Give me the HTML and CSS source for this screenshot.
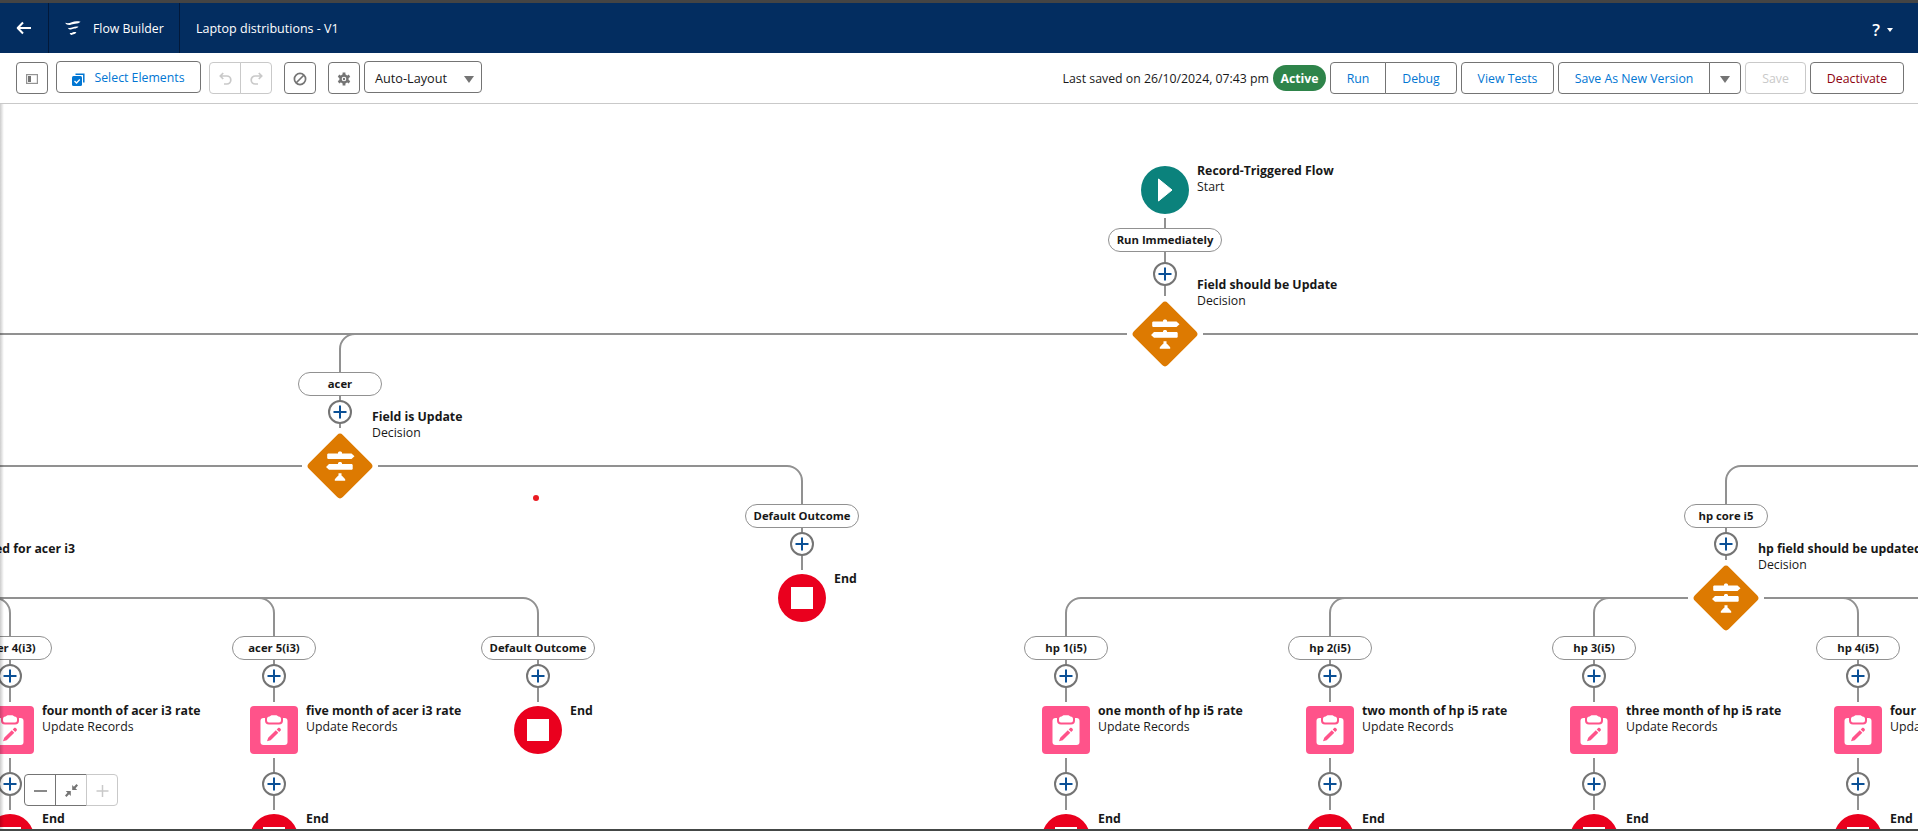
FILE: index.html
```
<!DOCTYPE html>
<html lang="en">
<head>
<meta charset="utf-8">
<title>Flow Builder</title>
<link rel="stylesheet" href="styles.css">
</head>
<body>
<svg class="defs" aria-hidden="true">
  <symbol id="decision" viewBox="0 0 66 66">
    <rect x="9" y="9" width="48" height="48" rx="4" transform="rotate(45 33 33)" fill="#dd7a01"/>
    <path fill="#fff" d="M21 20.500h10v-1l1-1h2l1 1v1h9.500l3 2.800-3 2.800H21l-.8-.8v-4zM22 31.100h9v-1l1-1h2l1 1v1h10l.7.8v4l-.7.8H22l-3-2.800zM31.500 40.300h3v2.200l1.200 1 2.500 2.800v1.500H27.800v-1.500l2.500-2.800 1.200-1z"/>
  </symbol>
  <symbol id="record" viewBox="0 0 48 48">
    <rect width="48" height="48" rx="4" fill="#ff538a"/>
    <rect x="10.500" y="12" width="27" height="27" rx="3" fill="#fff"/>
    <path fill="#ff538a" d="M15 11h18v3.500a4 4 0 0 1-4 4H19a4 4 0 0 1-4-4z"/>
    <path fill="#fff" d="M19.500 10.500l2-1.300h5l2 1.300a2.500 2.500 0 0 1 2.500 2.500v1.500a2 2 0 0 1-2 2H19a2 2 0 0 1-2-2V13a2.500 2.500 0 0 1 2.500-2.500z"/>
    <path fill="#ff538a" d="M17 35.300l1.200-3.600 7.600-7.400 2.500 2.500-7.600 7.400zM26.700 23.400l1.700-1.600c.8-.8 3.300 1.500 2.500 2.500l-1.700 1.600z"/>
  </symbol>
  <symbol id="end" viewBox="0 0 48 48">
    <circle cx="24" cy="24" r="24" fill="#ea001e"/><rect x="13" y="13" width="22" height="22" fill="#fff"/>
  </symbol>
  <symbol id="start" viewBox="0 0 48 48">
    <circle cx="24" cy="24" r="24" fill="#0b827c"/><path d="M17.500 13v22L31 24z" fill="#fff" stroke="#fff" stroke-linejoin="round"/>
  </symbol>
  <symbol id="add" viewBox="0 0 24 24">
    <circle cx="12" cy="12" r="11" fill="#fff" stroke="#747474" stroke-width="2"/><path d="M5.500 12h13M12 5.500v13" stroke="#0b5096" stroke-width="2"/>
  </symbol>
</svg>

<header class="topbar">
  <div class="back"><svg width="16" height="14" viewBox="0 0 16 14"><path d="M7 1.500L1.700 7 7 12.500M2 7h13" fill="none" stroke="#fff" stroke-width="2" stroke-linejoin="round"/></svg></div>
  <div class="app">
    <svg width="16" height="15" viewBox="0 0 16 15"><path fill="#fff" d="M.2 1.700c2 .7 4 .6 6.500-.4C9.500.2 12 0 15.600.8c-1.300 1.300-3 1.900-5.300 2-2 .1-3.300.9-5.300 1.100C2.800 4.100 1 3.400.2 1.700zM2.800 6.800c1.800.4 3.200.1 5-.6 2-.7 3.800-.8 5.800-.4-1.100 1.300-2.700 1.700-4.400 1.800-1.300.1-2 .8-3.400 1-1.300.1-2.400-.5-3-1.800zM4.700 12c1 .2 1.900 0 2.900-.5 1.200-.5 2.300-.6 3.800-.3-.7 1.300-1.700 1.900-2.900 2-.7.1-1.100.6-1.900.7-.9 0-1.500-.7-1.900-1.900z"/></svg>
    <span>Flow Builder</span>
  </div>
  <div class="flowname"><span>Laptop distributions - V1</span></div>
  <div class="help"><span class="q">?</span><i class="caret"></i></div>
</header>

<div class="toolbar">
  <div class="left">
    <button class="btn icon"><svg width="12" height="10" viewBox="0 0 12 10"><rect x=".6" y=".6" width="10.800" height="8.800" fill="none" stroke="#939393" stroke-width="1.200"/><path fill="#747474" d="M2 2h3v6H2z"/></svg></button>
    <button class="btn select raised"><svg width="13" height="13" viewBox="0 0 13 13"><path d="M3.500 1.200h8.300v8.300" fill="none" stroke="#0176d3" stroke-width="1.500"/><rect x="0" y="3" width="10" height="10" rx="1.500" fill="#0176d3"/><path d="M2.500 8l2 2 3.300-3.500" fill="none" stroke="#fff" stroke-width="1.300"/></svg><span>Select Elements</span></button>
    <div class="group history">
      <button class="btn icon off"><svg width="13" height="13" viewBox="0 0 13 13"><path d="M4.200 1L1.300 4l2.900 3M1.500 4h6.300a4 4 0 0 1 0 8H5" fill="none" stroke="#c9c9c9" stroke-width="1.700"/></svg></button>
      <button class="btn icon off"><svg width="13" height="13" viewBox="0 0 13 13"><path d="M8.800 1l2.900 3-2.900 3M11.500 4H5.200a4 4 0 0 0 0 8H8" fill="none" stroke="#c9c9c9" stroke-width="1.700"/></svg></button>
    </div>
    <button class="btn icon"><svg width="14" height="14" viewBox="0 0 14 14"><g fill="none" stroke="#747474" stroke-width="1.700"><circle cx="7" cy="7" r="5.600"/><path d="M3 11l8-8"/></g></svg></button>
    <div class="view">
      <button class="btn icon"><svg width="14" height="14" viewBox="0 0 14 14"><circle cx="7" cy="7" r="3.500" fill="none" stroke="#747474" stroke-width="2.400"/><path d="M7 .6v2.600M7 10.800v2.600M1.460 3.800l2.250 1.300M10.290 8.900l2.250 1.300M1.460 10.200l2.250-1.300M10.290 5.100l2.250-1.300" stroke="#747474" stroke-width="2.800"/><circle cx="7" cy="7" r="1.200" fill="#747474"/></svg></button>
      <button class="btn layout raised"><span>Auto-Layout</span><i class="arrow"></i></button>
    </div>
  </div>
  <div class="right">
    <span class="saved">Last saved on 26/10/2024, 07:43 pm</span>
    <span class="active">Active</span>
    <div class="group"><button class="btn run">Run</button><button class="btn debug">Debug</button></div>
    <button class="btn tests">View Tests</button>
    <div class="group"><button class="btn saveas">Save As New Version</button><button class="btn icon"><i class="arrow"></i></button></div>
    <button class="btn save off">Save</button>
    <button class="btn deactivate">Deactivate</button>
  </div>
</div>

<main class="canvas">
  <svg class="lines" width="1918" height="831" viewBox="0 0 1918 831"><g fill="none" stroke="#919191" stroke-width="2">
    <path d="M1165 218v78M0 334h1127M1203 334h715"/>
    <path d="M355 334a15 15 0 0 0-15 15v79M0 466h302M378 466h409a15 15 0 0 1 15 15v89"/>
    <path d="M1918 466h-177a15 15 0 0 0-15 15v79M1688 598h-607a15 15 0 0 0-15 15v89M1764 598h154"/>
    <path d="M1345 598a15 15 0 0 0-15 15v89M1609 598a15 15 0 0 0-15 15v89M1843 598a15 15 0 0 1 15 15v89"/>
    <path d="M0 598h523a15 15 0 0 1 15 15v89M259 598a15 15 0 0 1 15 15v89M-5 598a15 15 0 0 1 15 15v89"/>
    <path d="M10 758v52M274 758v52M1066 758v52M1330 758v52M1594 758v52M1858 758v52"/>
  </g></svg>

  <div class="node" style="--x:1165;--y:190"><svg class="shape"><use href="#start"/></svg><p class="label"><b>Record-Triggered Flow</b><span>Start</span></p></div>
  <div class="pill wide" style="--x:1165;--y:240">Run Immediately</div>
  <svg class="add" style="--x:1165;--y:274"><use href="#add"/></svg>
  <div class="node" style="--x:1165;--y:334"><svg class="shape diamond"><use href="#decision"/></svg><p class="label high"><b>Field should be Update</b><span>Decision</span></p></div>

  <div class="pill" style="--x:340;--y:384">acer</div>
  <svg class="add" style="--x:340;--y:412"><use href="#add"/></svg>
  <div class="node" style="--x:340;--y:466"><svg class="shape diamond"><use href="#decision"/></svg><p class="label high"><b>Field is Update</b><span>Decision</span></p></div>
  <i class="dot"></i>

  <div class="pill wide" style="--x:802;--y:516">Default Outcome</div>
  <svg class="add" style="--x:802;--y:544"><use href="#add"/></svg>
  <div class="node" style="--x:802;--y:598"><svg class="shape"><use href="#end"/></svg><p class="label"><b>End</b></p></div>

  <div class="pill" style="--x:1726;--y:516">hp core i5</div>
  <svg class="add" style="--x:1726;--y:544"><use href="#add"/></svg>
  <div class="node" style="--x:1726;--y:598"><svg class="shape diamond"><use href="#decision"/></svg><p class="label high"><b>hp field should be updated</b><span>Decision</span></p></div>

  <b class="cut">ed for acer i3</b>

  <div class="pill" style="--x:10;--y:648">acer 4(i3)</div>
  <svg class="add" style="--x:10;--y:676"><use href="#add"/></svg>
  <div class="node" style="--x:10;--y:730"><svg class="shape"><use href="#record"/></svg><p class="label"><b>four month of acer i3 rate</b><span>Update Records</span></p></div>
  <svg class="add" style="--x:10;--y:784"><use href="#add"/></svg>
  <div class="node" style="--x:10;--y:838"><svg class="shape"><use href="#end"/></svg><p class="label"><b>End</b></p></div>

  <div class="pill" style="--x:274;--y:648">acer 5(i3)</div>
  <svg class="add" style="--x:274;--y:676"><use href="#add"/></svg>
  <div class="node" style="--x:274;--y:730"><svg class="shape"><use href="#record"/></svg><p class="label"><b>five month of acer i3 rate</b><span>Update Records</span></p></div>
  <svg class="add" style="--x:274;--y:784"><use href="#add"/></svg>
  <div class="node" style="--x:274;--y:838"><svg class="shape"><use href="#end"/></svg><p class="label"><b>End</b></p></div>

  <div class="pill wide" style="--x:538;--y:648">Default Outcome</div>
  <svg class="add" style="--x:538;--y:676"><use href="#add"/></svg>
  <div class="node" style="--x:538;--y:730"><svg class="shape"><use href="#end"/></svg><p class="label"><b>End</b></p></div>

  <div class="pill" style="--x:1066;--y:648">hp 1(i5)</div>
  <svg class="add" style="--x:1066;--y:676"><use href="#add"/></svg>
  <div class="node" style="--x:1066;--y:730"><svg class="shape"><use href="#record"/></svg><p class="label"><b>one month of hp i5 rate</b><span>Update Records</span></p></div>
  <svg class="add" style="--x:1066;--y:784"><use href="#add"/></svg>
  <div class="node" style="--x:1066;--y:838"><svg class="shape"><use href="#end"/></svg><p class="label"><b>End</b></p></div>

  <div class="pill" style="--x:1330;--y:648">hp 2(i5)</div>
  <svg class="add" style="--x:1330;--y:676"><use href="#add"/></svg>
  <div class="node" style="--x:1330;--y:730"><svg class="shape"><use href="#record"/></svg><p class="label"><b>two month of hp i5 rate</b><span>Update Records</span></p></div>
  <svg class="add" style="--x:1330;--y:784"><use href="#add"/></svg>
  <div class="node" style="--x:1330;--y:838"><svg class="shape"><use href="#end"/></svg><p class="label"><b>End</b></p></div>

  <div class="pill" style="--x:1594;--y:648">hp 3(i5)</div>
  <svg class="add" style="--x:1594;--y:676"><use href="#add"/></svg>
  <div class="node" style="--x:1594;--y:730"><svg class="shape"><use href="#record"/></svg><p class="label"><b>three month of hp i5 rate</b><span>Update Records</span></p></div>
  <svg class="add" style="--x:1594;--y:784"><use href="#add"/></svg>
  <div class="node" style="--x:1594;--y:838"><svg class="shape"><use href="#end"/></svg><p class="label"><b>End</b></p></div>

  <div class="pill" style="--x:1858;--y:648">hp 4(i5)</div>
  <svg class="add" style="--x:1858;--y:676"><use href="#add"/></svg>
  <div class="node" style="--x:1858;--y:730"><svg class="shape"><use href="#record"/></svg><p class="label"><b>four month of hp i5 rate</b><span>Update Records</span></p></div>
  <svg class="add" style="--x:1858;--y:784"><use href="#add"/></svg>
  <div class="node" style="--x:1858;--y:838"><svg class="shape"><use href="#end"/></svg><p class="label"><b>End</b></p></div>

  <div class="group zoom">
    <button class="btn icon"><svg width="13" height="12" viewBox="0 0 13 12"><path d="M0 6h13" stroke="#747474" stroke-width="1.700"/></svg></button>
    <button class="btn icon"><svg width="13" height="13" viewBox="0 0 13 13"><path fill="#747474" d="M7.200 1v5h5l-1.700-1.700L13 1.500 11.500 0 8.900 2.700zM.8 7h5v5l-1.700-1.700L1.500 13 0 11.500l2.500-2.700z"/></svg></button>
    <button class="btn icon off"><svg width="13" height="12" viewBox="0 0 13 12"><path d="M.5 6h12M6.500 0v12" stroke="#c9c9c9" stroke-width="1.500"/></svg></button>
  </div>
</main>
</body>
</html>
```
FILE: styles.css
```
* { box-sizing: border-box; }
body {
  margin: 0;
  width: 1918px;
  height: 831px;
  position: relative;
  overflow: hidden;
  display: flex;
  flex-direction: column;
  background: #fff;
  border-top: 3px solid #444;
  border-bottom: 2px solid #444746;
  font: 12.300px/16px "Open Sans", "Noto Sans", sans-serif;
  color: #181818;
}
.defs { position: absolute; width: 0; height: 0; }
svg { display: block; flex: none; }

.topbar { flex: none; display: flex; height: 50px; background: #032d60; color: #fff; }
.topbar > div { display: flex; align-items: center; }
.back { width: 49px; padding-left: 16px; border-right: 1px solid #02193a; }
.app { width: 131px; padding-left: 16px; gap: 12px; border-right: 1px solid #02193a; }
.app span, .flowname span { padding-top: 2px; }
.flowname { padding-left: 16px; font-size: 12.500px; }
.help { margin-left: auto; padding: 3px 25px 0 0; gap: 7px; }
.q { font-size: 17px; font-weight: 600; }
.caret { border: 3.500px solid transparent; border-top: 4px solid #fff; border-bottom: 0; }

.toolbar {
  flex: none;
  position: relative;
  z-index: 2;
  height: 51px;
  display: flex;
  justify-content: space-between;
  align-items: center;
  padding: 0 14px 0 16px;
  background: #fff;
  border-bottom: 1px solid #c9c9c9;
}
.left, .right, .view, .group { display: flex; align-items: center; }
.left { gap: 8px; }
.history { margin-right: 4px; }
.view { gap: 4px; margin-left: 4px; }
.right { gap: 4px; }
.btn {
  height: 32px;
  display: flex;
  align-items: center;
  justify-content: center;
  margin: 0;
  padding: 2px 0 0;
  border: 1px solid #747474;
  border-radius: 4px;
  background: #fff;
  font: inherit;
  color: #0176d3;
  white-space: nowrap;
}
.btn.icon { width: 32px; }
.btn.icon { padding-top: 1px; }
.btn.off { border-color: #c9c9c9; color: #c9c9c9; }
.raised { position: relative; top: -1px; }
.group .btn:not(:first-child) { margin-left: -1px; border-top-left-radius: 0; border-bottom-left-radius: 0; }
.group .btn:not(:last-child) { border-top-right-radius: 0; border-bottom-right-radius: 0; }
.select { width: 145px; gap: 9px; }
.select svg { margin-top: 2px; }
.layout { width: 118px; gap: 17px; color: #181818; font-size: 12.700px; padding-left: 3px; }
.arrow { border: 5.500px solid transparent; border-top: 7px solid #747474; border-bottom: 0; margin-top: 2px; }
.saved { padding-top: 2px; }
.active {
  width: 53px;
  height: 26px;
  border-radius: 13px;
  background: #2e844a;
  color: #fff;
  font-weight: 700;
  line-height: 28px;
  text-align: center;
}
.run { width: 56px; }
.debug { width: 72px; }
.tests { width: 93px; }
.saveas { width: 152px; }
.save { width: 61px; }
.deactivate { width: 94px; color: #8e030f; }

.canvas { position: absolute; left: 0; top: -3px; width: 1918px; height: 831px; overflow: hidden; }
.canvas::before {
  content: "";
  position: absolute;
  z-index: 3;
  left: 0;
  top: 104px;
  width: 4px;
  height: 727px;
  background: linear-gradient(90deg, rgba(0,0,0,.2), transparent);
}
.lines { position: absolute; left: 0; top: 0; }
.node, .pill, .add { position: absolute; left: calc(var(--x) * 1px); top: calc(var(--y) * 1px); }
.add { width: 24px; height: 24px; margin: -12px 0 0 -12px; }
.shape { position: absolute; left: -24px; top: -24px; width: 48px; height: 48px; }
.diamond { left: -33px; top: -33px; width: 66px; height: 66px; }
.label { position: absolute; left: 32px; top: -27px; margin: 0; white-space: nowrap; }
.label.high { top: -57px; }
.label b, .label span { display: block; }
.pill {
  width: 84px;
  height: 24px;
  transform: translate(-50%, -50%);
  border: 1px solid #919191;
  border-radius: 12px;
  background: #fff;
  text-align: center;
  font-size: 11.300px;
  font-weight: 700;
  line-height: 22px;
  white-space: nowrap;
}
.pill.wide { width: 114px; }
.dot { position: absolute; left: 533px; top: 495px; width: 6px; height: 6px; border-radius: 50%; background: #ea1b22; }
.cut { position: absolute; right: 1843px; top: 541px; white-space: nowrap; }
.zoom { position: absolute; left: 24px; top: 774px; }
```
